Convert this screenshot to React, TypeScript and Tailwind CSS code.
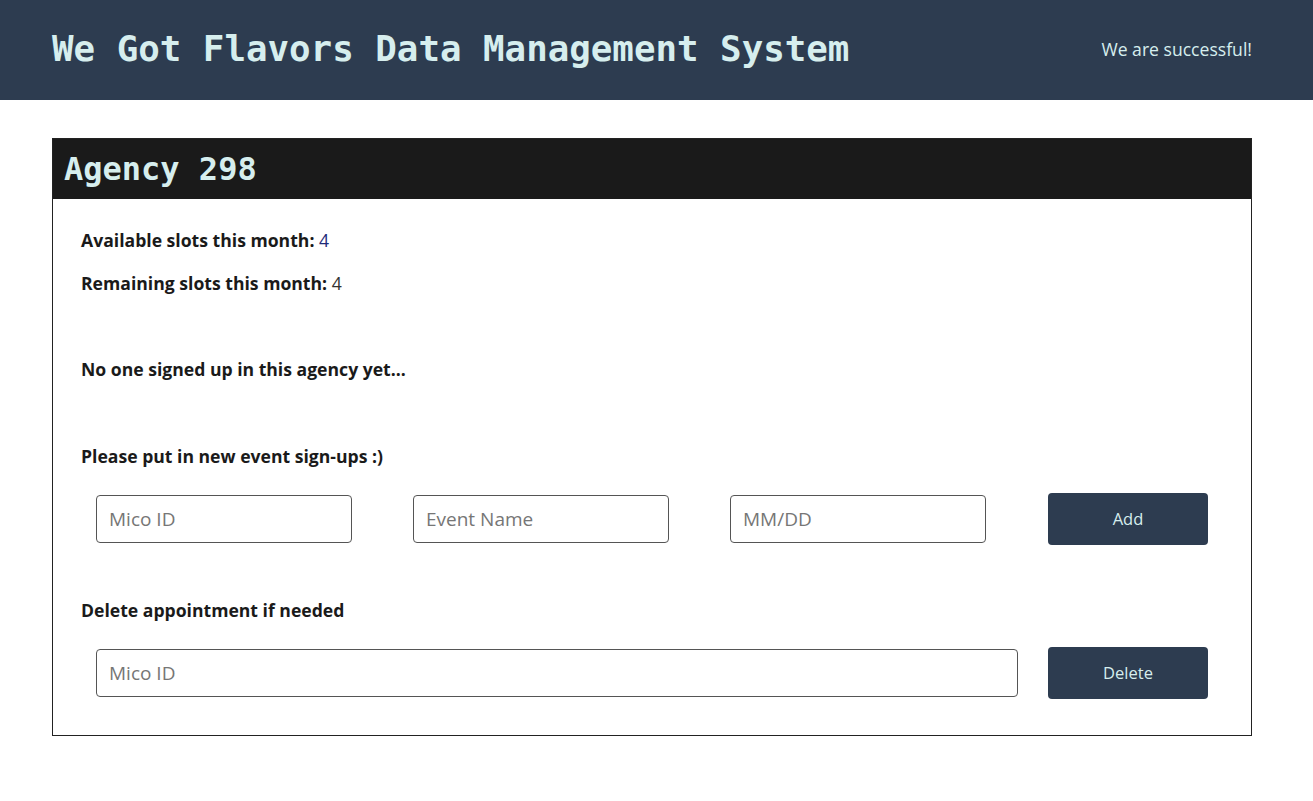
export default function App() {
  return (
    <div className="min-h-screen bg-white" style={{ fontFamily: '"Open Sans", sans-serif' }}>
      {/* top bar */}
      <header className="flex h-[100px] items-center justify-between bg-[#2d3c50] pb-[2px] pl-[52px] pr-[61px]">
        <h1 className="text-[35.8px] font-bold text-[#d6eeee]" style={{ fontFamily: '"DejaVu Sans Mono", monospace' }}>
          We Got Flavors Data Management System
        </h1>
        <span className="text-[17.6px] text-[#d6eeee]">We are successful!</span>
      </header>

      <main className="pl-[52px] pr-[61px] pt-[38px]">
        <section className="border border-[#222]">
          <div className="flex h-[60px] items-center bg-[#1a1a1a] px-[11px]">
            <h2 className="text-[32px] font-bold text-[#d6eeee]" style={{ fontFamily: '"DejaVu Sans Mono", monospace' }}>
              Agency 298
            </h2>
          </div>

          <div className="pl-[28px] pr-[43px] pb-[36px] pt-[29px] text-[17.6px] text-[#1a1a1a]">
            <p className="leading-[24px]">
              <b>Available slots this month:</b> <span className="text-[#1e2a78]">4</span>
            </p>
            <p className="mt-[19px] leading-[24px]">
              <b>Remaining slots this month:</b> <span className="text-[#333]">4</span>
            </p>
            <p className="mt-[62px] font-bold leading-[24px]">No one signed up in this agency yet...</p>
            <p className="mt-[63px] font-bold leading-[24px]">Please put in new event sign-ups :)</p>

            <div className="mt-[25px] flex items-center gap-[61px] pl-[15px]">
              <input placeholder="Mico ID" className="h-[48px] w-[256px] rounded-[4px] border border-[#555] px-3 text-[19px] placeholder:text-[#767676] outline-none" />
              <input placeholder="Event Name" className="h-[48px] w-[256px] rounded-[4px] border border-[#555] px-3 text-[19px] placeholder:text-[#767676] outline-none" />
              <input placeholder="MM/DD" className="h-[48px] w-[256px] rounded-[4px] border border-[#555] px-3 text-[19px] placeholder:text-[#767676] outline-none" />
              <button className="ml-[1px] h-[52px] w-[160px] rounded-[4px] bg-[#2d3c50] text-[16.5px] text-[#d6eeee]">Add</button>
            </div>

            <p className="mt-[53px] font-bold leading-[24px]">Delete appointment if needed</p>

            <div className="mt-[25px] flex items-center gap-[30px] pl-[15px]">
              <input placeholder="Mico ID" className="h-[48px] w-[922px] rounded-[4px] border border-[#555] px-3 text-[19px] placeholder:text-[#767676] outline-none" />
              <button className="h-[52px] w-[160px] rounded-[4px] bg-[#2d3c50] text-[16.5px] text-[#d6eeee]">Delete</button>
            </div>
          </div>
        </section>
      </main>
    </div>
  );
}
